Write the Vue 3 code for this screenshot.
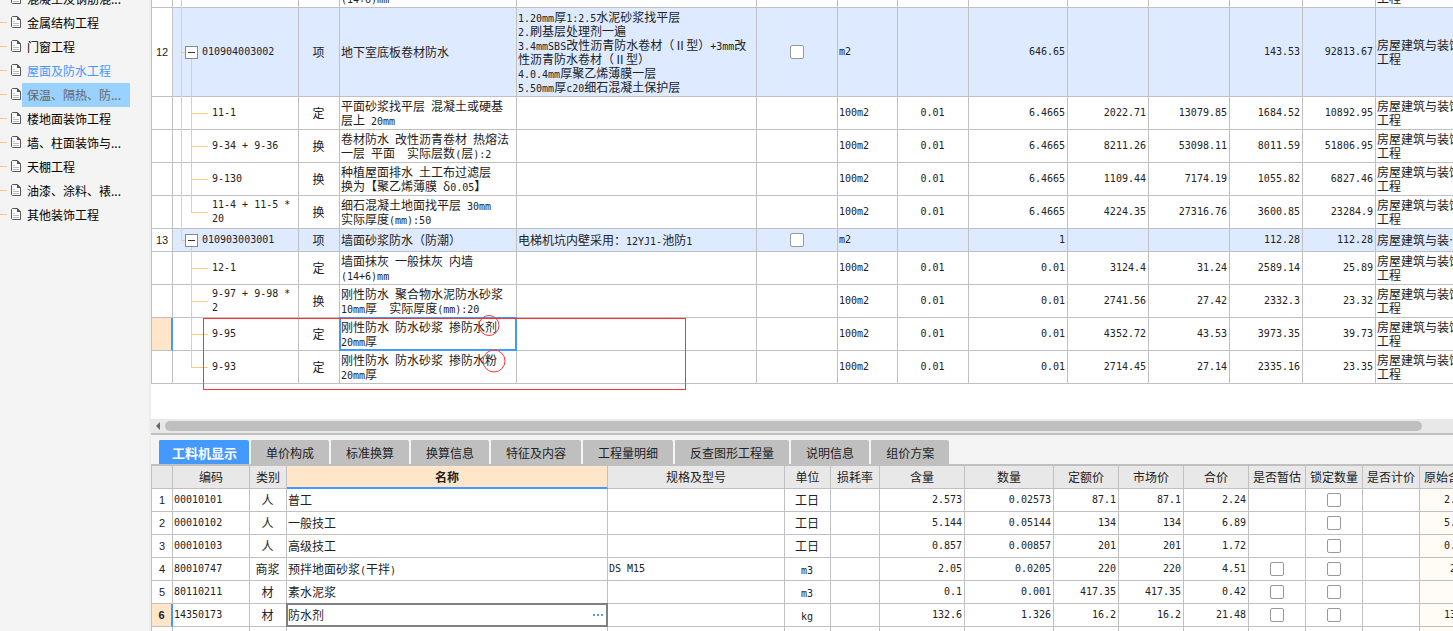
<script setup>
import { h, ref } from 'vue'

// Latin runs are set in a half-width monospace so they sit on the ideograph grid.
const MixedText = (props) =>
  h(
    'span',
    { class: 'mixed' },
    (String(props.text).match(/[\x20-\x7e]+|[^\x20-\x7e]+/g) || []).map((run) =>
      /^[\x20-\x7e]/.test(run) ? h('span', { class: 'latin' }, run) : run
    )
  )
MixedText.props = ['text']

const chapters = [
  '混凝土及钢筋混...',
  '金属结构工程',
  '门窗工程',
  '屋面及防水工程',
  '保温、隔热、防...',
  '楼地面装饰工程',
  '墙、柱面装饰与...',
  '天棚工程',
  '油漆、涂料、裱...',
  '其他装饰工程'
]

const major = '房屋建筑与装饰\n工程'
const billColumns = [22, 126, 41, 177, 240, 81, 60, 71, 99, 81, 81, 73, 73, 90]
const feature =
  '1.20mm厚1:2.5水泥砂浆找平层\n2.刷基层处理剂一遍\n3.4mmSBS改性沥青防水卷材（Ⅱ型）+3mm改\n性沥青防水卷材（Ⅱ型）\n4.0.4mm厚聚乙烯薄膜一层\n5.50mm厚c20细石混凝土保护层'
const bill = [
  { tree: 'leaf-last trunk', code: '', kind: '', name: '墙面抹灰 一般抹灰\n(14+6)mm', unit: '', ratio: '', v: ['', '', '', '', ''] },
  { tree: 'item trunk', no: 12, code: '010904003002', kind: '项', name: '地下室底板卷材防水', feature, unit: 'm2', v: ['646.65', '', '', '143.53', '92813.67'], tall: true },
  { tree: 'leaf trunk', code: '11-1', kind: '定', name: '平面砂浆找平层 混凝土或硬基\n层上 20mm', unit: '100m2', ratio: '0.01', v: ['6.4665', '2022.71', '13079.85', '1684.52', '10892.95'] },
  { tree: 'leaf trunk', code: '9-34 + 9-36', kind: '换', name: '卷材防水 改性沥青卷材 热熔法\n一层 平面  实际层数(层):2', unit: '100m2', ratio: '0.01', v: ['6.4665', '8211.26', '53098.11', '8011.59', '51806.95'] },
  { tree: 'leaf trunk', code: '9-130', kind: '换', name: '种植屋面排水 土工布过滤层\n换为【聚乙烯薄膜 δ0.05】', unit: '100m2', ratio: '0.01', v: ['6.4665', '1109.44', '7174.19', '1055.82', '6827.46'] },
  { tree: 'leaf-last trunk', code: '11-4 + 11-5 *\n20', kind: '换', name: '细石混凝土地面找平层 30mm\n实际厚度(mm):50', unit: '100m2', ratio: '0.01', v: ['6.4665', '4224.35', '27316.76', '3600.85', '23284.9'] },
  { tree: 'item end', no: 13, code: '010903003001', kind: '项', name: '墙面砂浆防水（防潮）', feature: '电梯机坑内壁采用：12YJ1-池防1', unit: 'm2', v: ['1', '', '', '112.28', '112.28'] },
  { tree: 'leaf', code: '12-1', kind: '定', name: '墙面抹灰 一般抹灰 内墙\n(14+6)mm', unit: '100m2', ratio: '0.01', v: ['0.01', '3124.4', '31.24', '2589.14', '25.89'] },
  { tree: 'leaf', code: '9-97 + 9-98 *\n2', kind: '换', name: '刚性防水 聚合物水泥防水砂浆\n10mm厚  实际厚度(mm):20', unit: '100m2', ratio: '0.01', v: ['0.01', '2741.56', '27.42', '2332.3', '23.32'] },
  { tree: 'leaf', code: '9-95', kind: '定', name: '刚性防水 防水砂浆 掺防水剂\n20mm厚', unit: '100m2', ratio: '0.01', v: ['0.01', '4352.72', '43.53', '3973.35', '39.73'], current: true },
  { tree: 'leaf-last', code: '9-93', kind: '定', name: '刚性防水 防水砂浆 掺防水粉\n20mm厚', unit: '100m2', ratio: '0.01', v: ['0.01', '2714.45', '27.14', '2335.16', '23.35'] }
]

const tabs = ['工料机显示', '单价构成', '标准换算', '换算信息', '特征及内容', '工程量明细', '反查图形工程量', '说明信息', '组价方案']
const activeTab = ref(0)

const partColumns = [22, 77, 37, 321, 177, 46, 49, 85, 89, 65, 65, 65, 57, 57, 57, 57]
const partHeads = ['', '编码', '类别', '名称', '规格及型号', '单位', '损耗率', '含量', '数量', '定额价', '市场价', '合价', '是否暂估', '锁定数量', '是否计价', '原始含量']
const parts = [
  { code: '00010101', kind: '人', name: '普工', spec: '', unit: '工日', v: ['2.573', '0.02573', '87.1', '87.1', '2.24'] },
  { code: '00010102', kind: '人', name: '一般技工', spec: '', unit: '工日', v: ['5.144', '0.05144', '134', '134', '6.89'] },
  { code: '00010103', kind: '人', name: '高级技工', spec: '', unit: '工日', v: ['0.857', '0.00857', '201', '201', '1.72'] },
  { code: '80010747', kind: '商浆', name: '预拌地面砂浆(干拌)', spec: 'DS M15', unit: 'm3', v: ['2.05', '0.0205', '220', '220', '4.51'], estimate: true },
  { code: '80110211', kind: '材', name: '素水泥浆', spec: '', unit: 'm3', v: ['0.1', '0.001', '417.35', '417.35', '0.42'], estimate: true },
  { code: '14350173', kind: '材', name: '防水剂', spec: '', unit: 'kg', v: ['132.6', '1.326', '16.2', '16.2', '21.48'], estimate: true, current: true }
]

const total = (widths) => widths.reduce((a, b) => a + b, 0) + 'px'
</script>

<template>
  <div class="app">
    <nav class="side" aria-label="分部">
      <a v-for="(c, i) in chapters" :key="c" href="#" class="chapter" :class="{ open: i === 3, picked: i === 4 }">
        <i class="twig"></i>
        <svg class="doc" width="10" height="12" viewBox="0 0 10 12">
          <path d="M1.5.5h4.8l3.2 3.2v7.8h-8l-1-1v-9z" fill="#fff" stroke="#555" />
          <path d="M6 0l4 4H6z" fill="#555" />
          <path d="M2 5.5h2M2 7.5h6M2 9.5h6" stroke="#bbb" />
        </svg>
        <span class="title">{{ c }}</span>
      </a>
    </nav>

    <main class="work">
      <section class="upper">
        <div class="sheet">
          <table class="grid bill" :style="{ width: total(billColumns) }">
            <colgroup><col v-for="(w, i) in billColumns" :key="i" :style="{ width: w + 'px' }" /></colgroup>
            <tbody>
              <tr v-for="(r, i) in bill" :key="i" :class="{ itemrow: r.no, tall: r.tall, current: r.current }">
                <th scope="row">{{ r.no }}</th>
                <td class="code" :class="r.tree">
                  <div class="codeline">
                    <button v-if="r.no" class="fold" type="button" aria-label="折叠"></button>
                    <span class="latin">{{ r.code }}</span>
                  </div>
                </td>
                <td class="mid">{{ r.kind }}</td>
                <td :class="{ cursor: r.current }"><MixedText :text="r.name" /></td>
                <td><MixedText :text="r.feature || ''" /></td>
                <td class="mid"><input v-if="r.no" type="checkbox" :aria-label="'锁定 ' + r.code" /></td>
                <td class="num">{{ r.unit }}</td>
                <td class="num mid">{{ r.ratio }}</td>
                <td v-for="(n, k) in r.v" :key="k" class="num right">{{ n }}</td>
                <td>{{ r.no === 13 ? '房屋建筑与装⋯' : major }}</td>
              </tr>
            </tbody>
          </table>
          <svg class="marks" width="700" height="419" viewBox="0 0 700 419" fill="none" stroke="#f33">
            <rect x="52.5" y="318.5" width="482" height="71" />
            <circle cx="338" cy="325.5" r="10" />
            <circle cx="343" cy="361" r="11" />
          </svg>
        </div>
        <div class="scroll">
          <svg width="6" height="8" viewBox="0 0 6 8"><path d="M5 0v8L1 4z" fill="#666" /></svg>
          <div class="thumb"></div>
        </div>
      </section>

      <section class="lower">
        <div class="tabs" role="tablist">
          <button
            v-for="(t, i) in tabs"
            :key="t"
            type="button"
            role="tab"
            :aria-selected="i === activeTab"
            :class="{ active: i === activeTab }"
            @click="activeTab = i"
          >{{ t }}</button>
        </div>
        <table class="grid parts" :style="{ width: total(partColumns) }">
          <colgroup><col v-for="(w, i) in partColumns" :key="i" :style="{ width: w + 'px' }" /></colgroup>
          <thead>
            <tr><th v-for="(t, i) in partHeads" :key="i" scope="col" :class="{ sorted: i === 3 }">{{ t }}</th></tr>
          </thead>
          <tbody>
            <tr v-for="(r, i) in parts" :key="r.code" :class="{ current: r.current }">
              <th scope="row">{{ i + 1 }}</th>
              <td class="num">{{ r.code }}</td>
              <td class="mid">{{ r.kind }}</td>
              <td v-if="r.current" class="editing">
                <div class="editor">
                  <input type="text" :value="r.name" aria-label="名称" />
                  <button type="button" aria-label="选择"><i></i><i></i><i></i></button>
                </div>
              </td>
              <td v-else><MixedText :text="r.name" /></td>
              <td class="num">{{ r.spec }}</td>
              <td class="mid"><MixedText :text="r.unit" /></td>
              <td></td>
              <td v-for="(n, k) in r.v" :key="k" class="num right">{{ n }}</td>
              <td class="mid"><input v-if="r.estimate" type="checkbox" :aria-label="'是否暂估 ' + r.name" /></td>
              <td class="mid"><input type="checkbox" :aria-label="'锁定数量 ' + r.name" /></td>
              <td></td>
              <td class="num right origin">{{ r.v[0] }}</td>
            </tr>
            <tr><th></th><td v-for="k in 15" :key="k" :class="{ origin: k === 15 }"></td></tr>
          </tbody>
        </table>
      </section>
    </main>
  </div>
</template>

<style>
body {
  margin: 0;
}
</style>

<style scoped>
.app {
  display: grid;
  grid-template-columns: 151px minmax(0, 1fr);
  grid-template-rows: minmax(0, 1fr);
  height: 100vh;
  overflow: hidden;
  background: #fff;
  color: #222;
  font: 12px/14px "Noto Sans CJK SC", sans-serif;
}
.side {
  display: flex;
  flex-direction: column;
  margin-top: -13px;
  background: #f4f4f4;
  border-right: 2px solid #ededed;
}
.chapter {
  display: flex;
  flex: none;
  align-items: center;
  height: 24px;
  color: #000;
  text-decoration: none;
}
.twig {
  width: 7px;
  height: 1px;
  margin: 0 4px 1px 0;
  background: #ffc880;
}
.doc {
  flex: none;
  margin: 0 1px 2px 0;
}
.title {
  width: 103px;
  padding-left: 5px;
  line-height: 24px;
  white-space: nowrap;
}
.open .title {
  color: #49f;
}
.picked .title {
  background: #99d1ff;
  color: #666;
}
.work {
  display: grid;
  grid-template-rows: minmax(0, 433fr) minmax(0, 198fr);
  min-width: 0;
  min-height: 0;
}
.upper {
  display: flex;
  flex-direction: column;
  min-width: 0;
  min-height: 0;
}
.sheet {
  position: relative;
  flex: 1;
  min-height: 0;
  overflow: hidden;
}
.grid {
  table-layout: fixed;
  border-collapse: separate;
  border-spacing: 0;
}
.grid th,
.grid td {
  height: 22px;
  padding: 0 2px 0 1px;
  border: 0 solid #c0c0c0;
  border-width: 0 1px 1px 0;
  box-sizing: content-box;
  white-space: pre;
  overflow: hidden;
  text-align: left;
  vertical-align: middle;
  font-weight: normal;
}
.grid tbody th:first-child {
  padding: 0;
  text-align: center;
  font-family: "Liberation Sans", sans-serif;
  font-size: 11px;
}
.grid th:first-child {
  border-left-width: 1px;
}
.bill {
  margin-top: -25px;
}
.bill td,
.bill th {
  height: 32px;
}
.bill .itemrow td,
.bill .itemrow th {
  height: 22px;
}
.bill .tall td,
.bill .tall th {
  height: 88px;
}
.itemrow td {
  background-color: #deeaff;
}
.grid .mid {
  text-align: center;
}
.grid .right {
  text-align: right;
}
.grid .num,
.latin,
:deep(.latin) {
  font-family: "DejaVu Sans Mono", monospace;
  font-size: 10px;
}
:deep(.mixed .latin) {
  line-height: 1;
}
.grid .current th {
  border-right: 2px solid #49f;
  background: #ffe6c8;
  font-weight: bold;
}
.grid .code {
  --line: linear-gradient(#ffc880, #ffc880);
  --rule: linear-gradient(#c0c0c0, #c0c0c0);
  --trunk-h: 0;
  --stem-y: 0;
  --stem-h: 100%;
  --arm-x: 18px;
  --arm-w: 17px;
  padding: 0 0 1px 39px;
  border-bottom: 0;
  background-image: var(--line), var(--line), var(--line), var(--rule);
  background-repeat: no-repeat;
  background-position: 8px 0, 18px var(--stem-y), var(--arm-x) 50%, 0 100%;
  background-size: 1px var(--trunk-h), 1px var(--stem-h), var(--arm-w) 1px, 100% 1px;
}
.grid .code.trunk {
  --trunk-h: 100%;
}
.grid .code.end {
  --trunk-h: 50%;
}
.grid .code.leaf-last {
  --stem-h: 50%;
}
.grid .code.item {
  --stem-y: 100%;
  --stem-h: 50%;
  --arm-x: 8px;
  --arm-w: 5px;
  padding-left: 12px;
}
.codeline {
  display: flex;
  align-items: center;
  gap: 4px;
}
.fold {
  flex: none;
  width: 13px;
  height: 13px;
  padding: 0;
  border: 1px solid #888;
  background: linear-gradient(#333, #333) center / 7px 1px no-repeat #fff;
}
.grid .cursor {
  position: relative;
  overflow: visible;
}
.cursor::after {
  content: "";
  position: absolute;
  inset: -1px;
  border: 2px solid #49f;
}
input[type="checkbox"] {
  appearance: none;
  display: block;
  width: 14px;
  height: 14px;
  margin: 0 auto;
  border: 1px solid #999;
  border-radius: 2px;
  background: #fff;
}
.marks {
  position: absolute;
  left: 0;
  top: 0;
}
.scroll {
  display: flex;
  align-items: center;
  gap: 4px;
  height: 14px;
  padding: 0 31px 0 4px;
  background: #e8e8e8;
}
.thumb {
  flex: 1;
  height: 10px;
  border-radius: 5px;
  background: #bfbfbf;
}
.lower {
  min-width: 0;
  min-height: 0;
  overflow: hidden;
  border-top: 2px solid #c0c0c0;
}
.tabs {
  display: flex;
  gap: 2px;
  padding: 5px 8px 0;
  background: #f4f4f4;
  border-bottom: 2px solid #c0c0c0;
}
.tabs button {
  height: 24px;
  padding: 2px 15px 0;
  border: 0;
  border-radius: 1px 2px 0 0;
  background: #bfbfbf;
  color: #222;
  font: inherit;
}
.tabs .active {
  padding: 2px 12px 0 13px;
  background: #49f;
  color: #fff;
  font-size: 13px;
  font-weight: bold;
}
.parts thead th {
  padding: 0;
  background: #e8e8e8;
  text-align: center;
}
.parts thead .sorted {
  height: 21px;
  border-bottom: 2px solid #49f;
  background: #ffe6c8;
  font-weight: bold;
}
.grid .origin {
  background: #fffbf5;
}
.grid .editing {
  position: relative;
  overflow: visible;
}
.editing::after {
  content: "";
  position: absolute;
  inset: -1px;
  border: 2px solid #808080;
  pointer-events: none;
}
.editor {
  display: flex;
  align-items: center;
}
.editor input {
  flex: 1;
  min-width: 0;
  padding: 0;
  border: 0;
  outline: 0;
  background: none;
  color: inherit;
  font: inherit;
}
.editor button {
  display: flex;
  gap: 2px;
  padding: 4px 2px;
  border: 0;
  background: none;
}
.editor i {
  width: 2px;
  height: 2px;
  background: #5b9bd0;
}
</style>
